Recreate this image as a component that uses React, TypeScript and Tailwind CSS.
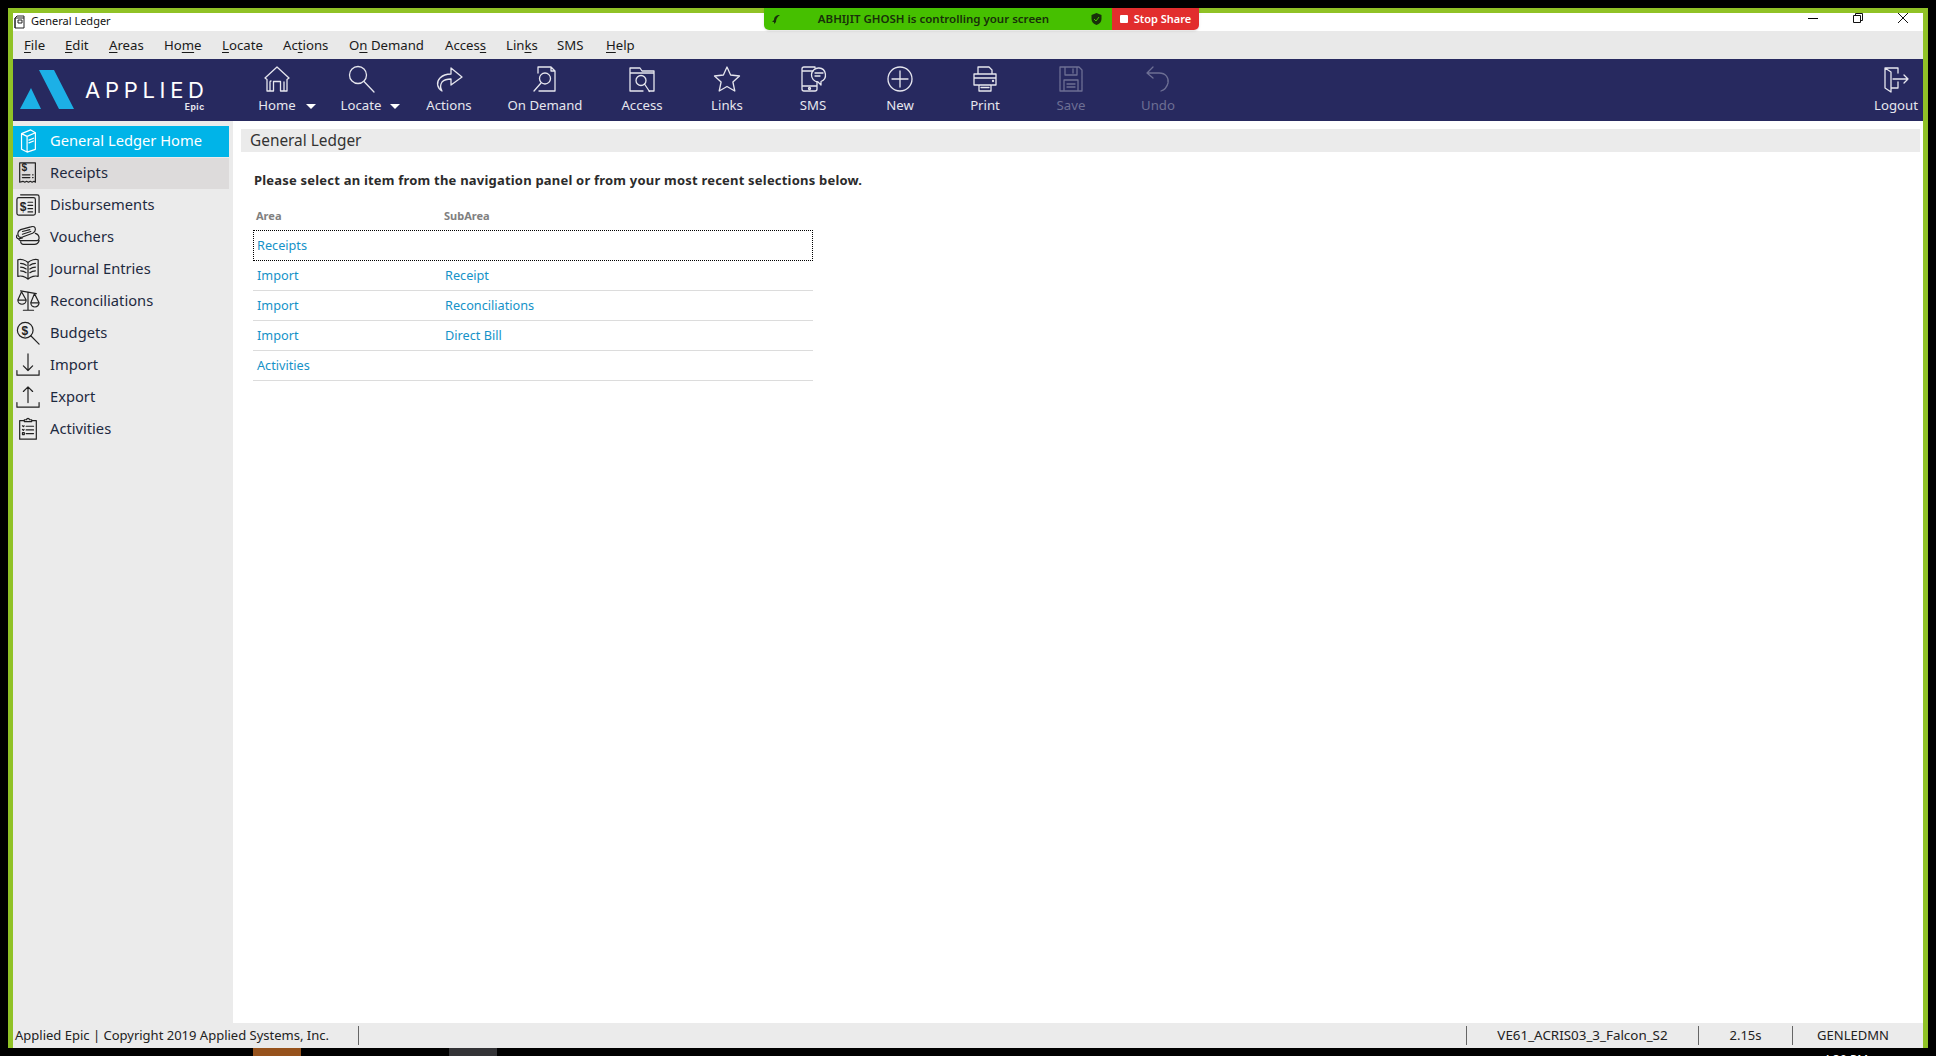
import React from "react";

const menus = [
  { before: "", key: "F", after: "ile", w: "w-[41px]" },
  { before: "", key: "E", after: "dit", w: "w-[44px]" },
  { before: "", key: "A", after: "reas", w: "w-[55px]" },
  { before: "Ho", key: "m", after: "e", w: "w-[58px]" },
  { before: "", key: "L", after: "ocate", w: "w-[61px]" },
  { before: "Ac", key: "t", after: "ions", w: "w-[66px]" },
  { before: "O", key: "n", after: " Demand", w: "w-[96px]" },
  { before: "Acces", key: "s", after: "", w: "w-[61px]" },
  { before: "Lin", key: "k", after: "s", w: "w-[51px]" },
  { before: "", key: "", after: "SMS", w: "w-[49px]" },
  { before: "", key: "H", after: "elp", w: "w-[40px]" },
];

function ToolIcon({ children }: { children: React.ReactNode }) {
  return (
    <svg width="28" height="28" viewBox="0 0 28 28" fill="none" stroke="currentColor" strokeWidth="1.3" strokeLinejoin="round" strokeLinecap="round">
      {children}
    </svg>
  );
}

const tools = [
  {
    label: "Home",
    w: "w-[84px]",
    caret: true,
    icon: <path d="M2 13 14 2l12 11-2 1.500V26h-6.500V16.500h-7V26H4V14.500Z M7 26V17a1 1 0 0 1 1-1 M21 26V17" />,
  },
  {
    label: "Locate",
    w: "w-[84px]",
    caret: true,
    icon: (
      <>
        <circle cx="11" cy="10" r="8.500" />
        <path d="M17 16.500 27 27" />
      </>
    ),
  },
  {
    label: "Actions",
    w: "w-[92px]",
    icon: <path d="M7 26C2 23 1 17 5 13c3-3 7-4 11-4V3l11 9-11 8v-6c-4 0-7 1-9 3-2 3-2 6 0 9Z" />,
  },
  {
    label: "On Demand",
    w: "w-[100px]",
    icon: (
      <>
        <path d="M7 2h13l4 4v20H8 M20 2v4h4 M7 2v6" />
        <circle cx="14" cy="13.500" r="5.500" />
        <path d="M10 18 3 26" />
      </>
    ),
  },
  {
    label: "Access",
    w: "w-[94px]",
    icon: (
      <>
        <path d="M2 8V3h10l2 3h12v20h-5 M2 8h24 M2 8v18h13" />
        <circle cx="13" cy="15.500" r="5" />
        <path d="m16.500 19 5 7.500" />
      </>
    ),
  },
  {
    label: "Links",
    w: "w-[76px]",
    icon: <path d="m14 2 3.600 8 8.900 1-6.600 6 1.900 9-7.800-4.500L6.200 26l1.900-9-6.600-6 8.900-1Z" />,
  },
  {
    label: "SMS",
    w: "w-[96px]",
    icon: (
      <>
        <path d="M16 3V2H5a2 2 0 0 0-2 2v20a2 2 0 0 0 2 2h11a2 2 0 0 0 2-2v-7 M3 6h11 M3 21h15" />
        <circle cx="10.500" cy="23.500" r="1" />
        <path d="M20 3a7 7 0 0 1 2 13.500V20l-3-3a7 7 0 0 1 1-14Z M16 8h8 M16 11h5" />
      </>
    ),
  },
  {
    label: "New",
    w: "w-[78px]",
    icon: (
      <>
        <circle cx="14" cy="14" r="12" />
        <path d="M14 6v16 M6 14h16" />
      </>
    ),
  },
  {
    label: "Print",
    w: "w-[92px]",
    icon: (
      <>
        <path d="M7 9V2h11l3 3v4 M7 20H3V9h22v11h-4 M3 13h22 M8 20v6h12v-6Z M10 22.500h8" />
        <circle cx="22" cy="16" r="0.500" />
      </>
    ),
  },
  {
    label: "Save",
    w: "w-[80px]",
    muted: true,
    icon: <path d="M3 2h19l3 3v21H3Z M8 2v8h12V2 M16 4v4 M7 15h14v11H7Z M10 19h8 M10 22h8" />,
  },
  {
    label: "Undo",
    w: "w-[94px]",
    muted: true,
    icon: <path d="M9 2 3 8l6 5 M3 8h12c7 0 10 5 9 10-1 4-4 7-7 8" />,
  },
];

function NavIcon({ children, stroke = "#222" }: { children: React.ReactNode; stroke?: string }) {
  return (
    <svg width="24" height="24" viewBox="0 0 26 26" fill="none" stroke={stroke} strokeWidth="1.300" strokeLinejoin="round" strokeLinecap="round">
      {children}
    </svg>
  );
}

const DollarText = ({ x, y, size = 11 }: { x: number; y: number; size?: number }) => (
  <text x={x} y={y} fontSize={size} fontWeight="700" fill="#222" stroke="none" fontFamily="'Liberation Sans', sans-serif">
    $
  </text>
);

const navItems = [
  {
    label: "Receipts",
    hover: true,
    icon: (
      <>
        <path d="M4 2h17v21l-1.500-1-2 1-2-1-2 1-2-1-2 1-2-1L4 23Z" />
        <DollarText x={6} y={11} />
        <path d="M7 15h8 M7 18h8 M18 15h.500 M18 18h.500" strokeWidth="1.500" />
      </>
    ),
  },
  {
    label: "Disbursements",
    icon: (
      <>
        <rect x="1" y="5" width="20" height="19" rx="2" />
        <path d="M5 2h18a2 2 0 0 1 2 2v17" />
        <DollarText x={4} y={19} size={13} />
        <path d="M13 10h5 M13 13.500h5 M13 17h5 M13 20.500h5" />
      </>
    ),
  },
  {
    label: "Vouchers",
    icon: (
      <>
        <path d="M2 9c0-2 1-3 3-4l11-3c3-1 5 0 5 3 0 2-1 3-3 4L7 13c-3 1-5 0-5-4Z" />
        <path d="M7 7l8-2 M7 10l9-3" />
        <path d="M1 11c-1 2 0 4 2 4l4-1 M21 9c3 1 4 3 4 5 0 2-2 3-4 3H6c-2 0-3-1-3-2 M5 18c0 1 1 3 3 3h12c2 0 4-1 5-4" />
      </>
    ),
  },
  {
    label: "Journal Entries",
    icon: (
      <>
        <path d="M13 6C10 3 5 2 2 3v18c3-1 8 0 11 3 3-3 8-4 11-3V3c-3-1-8 0-11 3Z M13 6v18" />
        <path d="M5 7c2 0 4 .500 6 2 M5 11c2 0 4 .500 6 2 M5 15c2 0 4 .500 6 2 M21 7c-2 0-4 .500-6 2 M21 11c-2 0-4 .500-6 2 M21 15c-2 0-4 .500-6 2" />
      </>
    ),
  },
  {
    label: "Reconciliations",
    icon: (
      <>
        <path d="M13 3v20 M8 23h11 M5 2l17 3" />
        <path d="M6 3 2 12h9Z M2 12a4.500 4.500 0 0 0 9 0 M20 5l-4 10h9Z M16 15a4.500 4.500 0 0 0 9 0" />
      </>
    ),
  },
  {
    label: "Budgets",
    icon: (
      <>
        <circle cx="10" cy="10" r="8.500" />
        <path d="m16 16 9 9" />
        <DollarText x={6} y={15} size={13} />
      </>
    ),
  },
  {
    label: "Import",
    icon: <path d="M13 1v18 M8 14l5 5 5-5 M1 19v5h24v-5" />,
  },
  {
    label: "Export",
    icon: <path d="M13 19V2 M8 7l5-5 5 5 M1 19v5h24v-5" />,
  },
  {
    label: "Activities",
    icon: (
      <>
        <path d="M9 4H4v20h18V4h-5 M9 5V3h2.500a1.500 1.500 0 0 1 3 0H17v2Z" />
        <path d="M11 10h8 M11 14h8 M11 18h8 M7 9.500l1 1 .800-1 M7 13.500l1 1 .800-1" />
        <rect x="7" y="17" width="2" height="2" />
      </>
    ),
  },
];

const rows = [
  { area: "Import", sub: "Receipt" },
  { area: "Import", sub: "Reconciliations" },
  { area: "Import", sub: "Direct Bill" },
  { area: "Activities", sub: "" },
];

export default function App() {
  return (
    <div className="relative flex h-[1056px] w-[1936px] flex-col overflow-hidden bg-black font-['Noto_Sans',sans-serif]">
      <div className="mx-2 mt-2 flex min-h-0 flex-1 flex-col border-x-[5px] border-t-[5px] border-[#90c226] bg-white">
        {/* title bar */}
        <div className="flex h-[18px] items-center justify-between bg-white">
          <div className="flex items-center gap-[6px]">
            <svg width="12" height="14" viewBox="0 0 12 14" fill="none" stroke="#222" strokeWidth="1">
              <path d="M2 3h9v10H2Z M2 3 4 1h7v2 M2 3v10 M5 5h4v3H5Z" />
            </svg>
            <span className="mb-[3px] text-[11px] leading-none text-[#111]">General Ledger</span>
          </div>
          <div className="flex h-full items-start gap-[35px] pr-[15px]">
            <div className="mt-[5px] h-px w-[10px] bg-black" />
            <svg width="10" height="10" viewBox="0 0 10 10" fill="none" stroke="#111" strokeWidth="1">
              <path d="M.500 2.500h7v7h-7Z M2.500 2.500v-2h7v7h-2" />
            </svg>
            <svg width="10" height="10" viewBox="0 0 10 10" fill="none" stroke="#111" strokeWidth="1">
              <path d="m0 0 10 10 M10 0 0 10" />
            </svg>
          </div>
        </div>

        {/* menu bar */}
        <div className="flex h-[28px] items-center bg-[#e9e9e9] pl-[11px] pt-[2px] text-[13.200px] text-[#1a1a1a]">
          {menus.map((m) => (
            <span key={m.before + m.key + m.after} className={`${m.w} whitespace-pre`}>
              {m.before}
              {m.key && <span className="underline underline-offset-2">{m.key}</span>}
              {m.after}
            </span>
          ))}
        </div>

        {/* toolbar */}
        <div className="flex h-[62px] items-stretch bg-[#27295f] text-[#e6e6ee]">
          <div className="flex w-[222px] shrink-0 items-center">
            <svg width="54" height="40" viewBox="0 0 54 40" className="ml-[7px]" fill="#1cb0e6">
              <path d="M0 39 11 18l10 21Z M19 0h15l20 39H39Z" />
            </svg>
            <div className="ml-[11px] mt-[9px] flex flex-col items-end">
              <span className="font-['Inter',sans-serif] text-[22px] leading-[24px] tracking-[4.700px] text-white">APPLIED</span>
              <span className="mr-[4px] font-['Inter',sans-serif] text-[8.500px] font-bold leading-[10px] tracking-[0.500px] text-[#e6e6ee]">Epic</span>
            </div>
          </div>
          {tools.map((t) => (
            <div key={t.label} className={`relative flex shrink-0 flex-col items-center pt-[6px] ${t.w} ${t.muted ? "text-[#6d6f94]" : ""}`}>
              <ToolIcon>{t.icon}</ToolIcon>
              <span className="mt-[2px] text-[13.200px] leading-[20px]">{t.label}</span>
              {t.caret && <span className="absolute left-[71px] top-[45px] h-0 w-0 border-x-[5px] border-t-[5px] border-x-transparent border-t-white" />}
            </div>
          ))}
          <div className="ml-auto mr-[2px] flex w-[50px] flex-col items-center pt-[6px]">
            <ToolIcon>
              <path d="M3 3h13v5 M16 17v6H9 M3 3l6 4v20l-6-4Z M11 14h15 M22 10l4 4-4 4" />
            </ToolIcon>
            <span className="mt-[2px] text-[13.200px] leading-[20px]">Logout</span>
          </div>
        </div>

        {/* body */}
        <div className="flex min-h-0 flex-1">
          <nav className="flex w-[220px] shrink-0 flex-col gap-[1px] bg-[#ebebeb] pt-[5px]">
            <div className="flex h-[31px] w-[216px] items-center bg-[#00b4e8] pb-[2px] text-[14.700px] text-white">
              <span className="flex w-[37px] pl-[3px]">
                <NavIcon stroke="#fff">
                  <path d="M6 5 16 1l5 3v18l-9 3-6-3Z M6 5l6 3v17 M12 8l9-4 M14 12l5-2 M14 15l5-2" />
                </NavIcon>
              </span>
              General Ledger Home
            </div>
            {navItems.map((n) => (
              <div key={n.label} className={`flex h-[31px] w-[216px] items-center pb-[2px] text-[14.700px] text-[#1e2a3f] ${n.hover ? "bg-[#dddbdb]" : ""}`}>
                <span className="flex w-[37px] pl-[3px]">
                  <NavIcon>{n.icon}</NavIcon>
                </span>
                {n.label}
              </div>
            ))}
          </nav>

          <main className="min-w-0 flex-1 pl-2 pr-[3px] pt-2">
            <div className="flex h-[23px] items-center bg-[#ebebeb] pl-[9px] text-[15.400px] text-[#333]">General Ledger</div>
            <div className="pl-[12px]">
              <p className="mt-[19px] pl-[1px] text-[13px] font-bold leading-[18px] tracking-[0.205px] text-[#2b2b2b]">
                Please select an item from the navigation panel or from your most recent selections below.
              </p>
              <div className="mt-[18px] w-[560px] text-[12.700px] text-[#1592c8]">
                <div className="grid h-[23px] grid-cols-[188px_1fr] items-center pb-[4px] pl-[3px] text-[11px] font-bold text-[#808080]">
                  <span>Area</span>
                  <span>SubArea</span>
                </div>
                <div className="flex h-[31px] items-center border border-dotted border-black pl-[3px]">Receipts</div>
                {rows.map((r) => (
                  <div key={r.area + r.sub} className="grid h-[30px] grid-cols-[188px_1fr] items-center border-b border-[#dcdcdc] pl-[4px]">
                    <span>{r.area}</span>
                    <span>{r.sub}</span>
                  </div>
                ))}
              </div>
            </div>
          </main>
        </div>

        {/* status bar */}
        <div className="flex h-[25px] items-center bg-[#ebebeb] text-[13px] text-[#222]">
          <div className="flex h-[19px] w-[346px] items-center border-r border-[#666] pl-[2px]">Applied Epic | Copyright 2019 Applied Systems, Inc.</div>
          <div className="flex-1" />
          <div className="flex h-[19px] w-[232px] items-center justify-center border-l border-[#666] text-[13.400px]">VE61_ACRIS03_3_Falcon_S2</div>
          <div className="flex h-[19px] w-[94px] items-center justify-center border-l border-[#666]">2.15s</div>
          <div className="flex h-[19px] w-[131px] items-center justify-center border-l border-[#666] pr-[10px]">GENLEDMN</div>
        </div>
      </div>

      {/* sliver of the desktop taskbar under the window */}
      <div className="relative flex h-[8px] shrink-0 bg-black">
        <div className="ml-[253px] h-full w-[48px] bg-[#96521c]" />
        <div className="ml-[148px] h-full w-[48px] bg-[#333336]" />
        <span className="absolute left-[1823px] top-[4px] text-[12px] leading-[16px] text-white">4:30 PM</span>
      </div>

      {/* screen share banner */}
      <div className="absolute left-[764px] top-[8px] flex h-[22px] w-[435px] overflow-hidden rounded-b-[5px] text-[11.500px] font-semibold shadow">
        <div className="flex w-[348px] items-center justify-between bg-[#46c000] pl-[7px] pr-[10px] text-[#18300a]">
          <svg width="11" height="11" viewBox="0 0 11 11" fill="#18300a">
            <path d="M9 1C5 1 3 3 3 6L1 8h2v2l2-2c0-3 1-5 4-7Z" />
          </svg>
          <span className="mr-[6px]">ABHIJIT GHOSH is controlling your screen</span>
          <svg width="11" height="12" viewBox="0 0 11 12" fill="#18300a">
            <path d="M5.500 0 10.500 2v4c0 3-2 5-5 6-3-1-5-3-5-6V2Z" />
            <path d="m3 6 2 2 3-4" fill="none" stroke="#46c000" strokeWidth="1" />
          </svg>
        </div>
        <div className="flex flex-1 items-center justify-center gap-[6px] bg-[#e22d2d] text-[11px] text-white">
          <span className="h-[8px] w-[8px] rounded-[1px] bg-white" />
          Stop Share
        </div>
      </div>
    </div>
  );
}
